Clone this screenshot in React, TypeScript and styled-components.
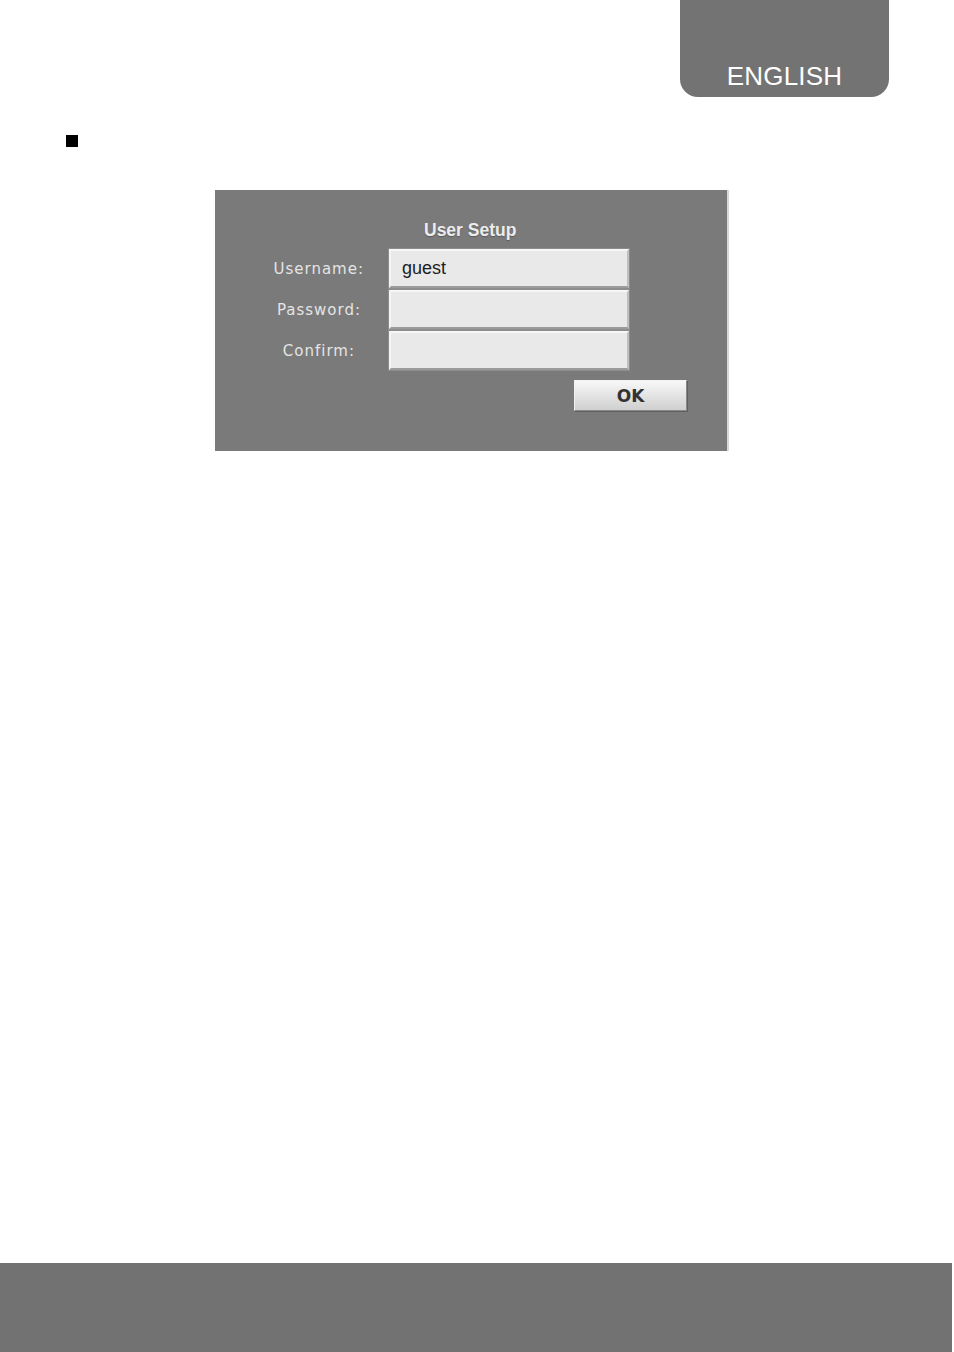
import { Fragment } from 'react';
import styled, { createGlobalStyle } from 'styled-components';

const GlobalStyle = createGlobalStyle`
  html, body {
    margin: 0;
    padding: 0;
    background: #ffffff;
  }
`;

const Page = styled.div`
  width: 954px;
  min-height: 1352px;
  display: flex;
  flex-direction: column;
  font-family: 'Liberation Sans', Arial, sans-serif;
`;

const Header = styled.header`
  display: flex;
  justify-content: flex-end;
  padding-right: 65px;
`;

const LanguageTab = styled.div`
  width: 209px;
  height: 97px;
  box-sizing: border-box;
  background: #727372;
  border-radius: 0 0 18px 18px;
  display: flex;
  align-items: flex-end;
  justify-content: center;
  padding-bottom: 5px;
  color: #ffffff;
  font-size: 26px;
  letter-spacing: 0.2px;
`;

const Bullet = styled.span`
  display: block;
  width: 12px;
  height: 12px;
  margin: 38px 0 0 66px;
  background: #000000;
`;

const Dialog = styled.section`
  width: 512px;
  height: 261px;
  box-sizing: border-box;
  margin: 43px 0 0 215px;
  background: #7a7a7a;
  box-shadow: 2px 0 0 #d8d8d8;
  padding-top: 30px;
  display: flex;
  flex-direction: column;
`;

const Title = styled.h2`
  margin: 0 0 0 209px;
  font-family: 'Liberation Sans', Arial, sans-serif;
  font-size: 17.5px;
  font-weight: bold;
  line-height: 21px;
  color: #ececec;
  text-shadow: 0 1px 1px rgba(60, 60, 60, 0.5);
`;

const Form = styled.div`
  display: grid;
  grid-template-columns: 149px 240px;
  column-gap: 25px;
  row-gap: 2px;
  margin-top: 8px;
  align-items: center;
`;

const Label = styled.label<{ $shift?: number }>`
  text-align: right;
  font-family: 'DejaVu Sans', Verdana, sans-serif;
  font-size: 15px;
  letter-spacing: 1px;
  color: #e4e4e4;
  padding-right: ${({ $shift }) => $shift ?? 0}px;
`;

const Field = styled.div`
  height: 39px;
  box-sizing: border-box;
  background: #e9e9e9;
  border: 2px solid;
  border-color: #f6f6f6 #bfbfbf #9b9b9b #f4f4f4;
  box-shadow: 0 0 0 1px #8d8d8d;
  display: flex;
  align-items: center;
  padding-left: 11px;
  font-size: 18px;
  color: #1d1d1d;
`;

const Actions = styled.div`
  display: flex;
  justify-content: flex-end;
  padding-right: 40px;
  margin-top: 10px;
`;

const OkButton = styled.button`
  width: 113px;
  height: 31px;
  box-sizing: border-box;
  border: 1px solid #8a8a8a;
  border-top-color: #f2f2f2;
  border-left-color: #f0f0f0;
  background: linear-gradient(#f8f8f8 0%, #e6e6e6 45%, #cfcfcf 100%);
  box-shadow: 1px 1px 0 #5f5f5f;
  font-family: 'DejaVu Sans', Verdana, sans-serif;
  font-size: 17px;
  font-weight: bold;
  color: #333333;
  padding: 0;
`;

const Footer = styled.footer`
  margin-top: auto;
  width: 952px;
  height: 89px;
  background: #727272;
`;

const fields = [
  { label: 'Username:', value: 'guest', shift: 0 },
  { label: 'Password:', value: '', shift: 3 },
  { label: 'Confirm:', value: '', shift: 9 },
];

const App = () => (
  <>
    <GlobalStyle />
    <Page>
      <Header>
        <LanguageTab>ENGLISH</LanguageTab>
      </Header>
      <Bullet />
      <Dialog>
        <Title>User Setup</Title>
        <Form>
          {fields.map((f) => (
            <Fragment key={f.label}>
              <Label $shift={f.shift}>{f.label}</Label>
              <Field>{f.value}</Field>
            </Fragment>
          ))}
        </Form>
        <Actions>
          <OkButton>OK</OkButton>
        </Actions>
      </Dialog>
      <Footer />
    </Page>
  </>
);

export default App;
